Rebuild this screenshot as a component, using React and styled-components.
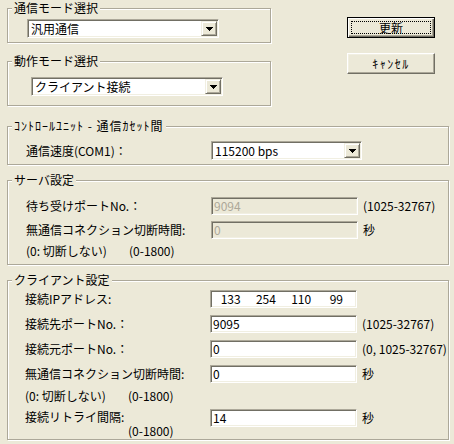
import React from 'react';
import styled, { createGlobalStyle } from 'styled-components';

const GlobalStyle = createGlobalStyle`
  html, body { margin: 0; padding: 0; background: #ECE9D8; }
  body {
    font-family: "MS UI Gothic", "Noto Sans CJK JP", "Liberation Sans", sans-serif;
    font-size: 12px; color: #000;
  }
`;

const Dialog = styled.div`
  width: 454px; height: 444px; box-sizing: border-box;
  padding: 2px 5px 0 7px;
  background: #ECE9D8;
  display: flex; flex-direction: column;
`;

const Top = styled.div`display: flex;`;
const LeftCol = styled.div`width: 264px; display: flex; flex-direction: column; gap: 12px;`;
const ButtonCol = styled.div`
  margin-left: 76px; padding-top: 15px;
  display: flex; flex-direction: column; gap: 15px;
`;

const Group = styled.fieldset`
  margin: ${p => p.$mt || 0}px 0 0;
  padding: 0;
  min-width: 0;
  border: 1px solid #ACA899;
  box-shadow: 1px 1px 0 #fff, inset 1px 1px 0 #fff;
`;

// half-width kana in the legend/button come out narrower than MS UI Gothic, so $wide spreads them
const Legend = styled.legend`
  margin-left: 4px;
  padding: 0 2px;
  line-height: 12px;
  letter-spacing: ${p => (p.$wide ? '1px' : 'normal')};
  background: #ECE9D8;
  white-space: nowrap;
`;

const Body = styled.div`
  padding: ${p => p.$pad};
  display: flex; flex-direction: column;
  gap: ${p => p.$gap || 0}px;
`;

const Combo = styled.div`
  width: ${p => p.$w}px; height: 19px; box-sizing: border-box;
  display: flex; align-items: center;
  background: #fff;
  border: 1px solid; border-color: #ACA899 #fff #fff #ACA899;
  box-shadow: inset 1px 1px 0 #716F64, inset -1px -1px 0 #F1EFE2;
  padding: 1px;
`;

const ComboText = styled.span`flex: 1; padding-left: 2px; line-height: 12px; white-space: nowrap;`;

const DropButton = styled.span`
  width: 16px; height: 15px; box-sizing: border-box;
  display: flex; align-items: center; justify-content: center;
  background: #ECE9D8;
  border: 1px solid; border-color: #F1EFE2 #716F64 #716F64 #F1EFE2;
  box-shadow: inset 1px 1px 0 #fff, inset -1px -1px 0 #ACA899;
`;

const Button = styled.button`
  width: 88px; height: 21px; box-sizing: border-box;
  position: relative;
  font: inherit; line-height: 12px; color: #000;
  letter-spacing: ${p => (p.$wide ? '1.5px' : 'normal')};
  background: #ECE9D8;
  border: 1px solid; padding: 0;
  border-color: ${p => (p.$default ? '#000' : '#fff #716F64 #716F64 #fff')};
  box-shadow: ${p => (p.$default
    ? 'inset 1px 1px 0 #fff, inset -1px -1px 0 #716F64, inset -2px -2px 0 #ACA899'
    : 'inset -1px -1px 0 #ACA899, inset 1px 1px 0 #F1EFE2')};
  &::after {
    content: ''; position: absolute; inset: 3px;
    border: 1px dotted #000;
    display: ${p => (p.$default ? 'block' : 'none')};
  }
`;

const Row = styled.div`
  display: grid;
  grid-template-columns: 185px ${p => p.$fw || 147}px auto;
  align-items: ${p => p.$align || 'center'};
`;

const Label = styled.span`line-height: 12px; white-space: nowrap;`;
const Note = styled.span`
  line-height: 12px; margin-left: 5px; white-space: nowrap;
  padding-top: ${p => p.$pt || 0}px;
`;

const LabelStack = styled.div`display: flex; flex-direction: column; gap: 2px; padding-top: 2px;`;

const Sub = styled.div`display: flex; line-height: 12px; white-space: nowrap;`;
const SubLead = styled.span`width: 103px;`;

const Field = styled.div`
  height: 18px; box-sizing: border-box;
  display: flex; align-items: center;
  background: ${p => (p.$disabled ? '#ECE9D8' : '#fff')};
  color: ${p => (p.$disabled ? '#ACA899' : '#000')};
  border: 1px solid; border-color: #ACA899 #fff #fff #ACA899;
  box-shadow: inset 1px 1px 0 #716F64, inset -1px -1px 0 #F1EFE2;
  padding: 0 2px;
  line-height: 12px;
`;

const IpPart = styled.span`flex: 1; text-align: center;`;

const Arrow = () => (
  <svg width="7" height="4" viewBox="0 0 7 4" shapeRendering="crispEdges">
    <path d="M0 0h7v1h-1v1h-1v1h-1v1h-1v-1h-1v-1h-1v-1h-1z" fill="#000" />
  </svg>
);

const ComboBox = ({ w, value }) => (
  <Combo $w={w}>
    <ComboText>{value}</ComboText>
    <DropButton><Arrow /></DropButton>
  </Combo>
);

export default function App() {
  return (
    <>
      <GlobalStyle />
      <Dialog>
        <Top>
          <LeftCol>
            <Group>
              <Legend>通信モード選択</Legend>
              <Body $pad="5px 0 4px 19px">
                <ComboBox w={192} value="汎用通信" />
              </Body>
            </Group>
            <Group>
              <Legend>動作モード選択</Legend>
              <Body $pad="10px 0 9px 23px">
                <ComboBox w={192} value="クライアント接続" />
              </Body>
            </Group>
          </LeftCol>
          <ButtonCol>
            <Button $default>更新</Button>
            <Button $wide>ｷｬﾝｾﾙ</Button>
          </ButtonCol>
        </Top>

        <Group $mt={14}>
          <Legend $wide>ｺﾝﾄﾛｰﾙﾕﾆｯﾄ - 通信ｶｾｯﾄ間</Legend>
          <Body $pad="9px 0 4px 18px">
            <Row $fw={151}>
              <Label>通信速度(COM1)：</Label>
              <ComboBox w={151} value="115200 bps" />
            </Row>
          </Body>
        </Group>

        <Group $mt={9}>
          <Legend>サーバ設定</Legend>
          <Body $pad="11px 0 7px 18px" $gap={6}>
            <Row>
              <Label>待ち受けポートNo.：</Label>
              <Field $disabled>9094</Field>
              <Note>(1025-32767)</Note>
            </Row>
            <Row>
              <Label>無通信コネクション切断時間:</Label>
              <Field $disabled>0</Field>
              <Note>秒</Note>
            </Row>
            <Sub><SubLead>(0: 切断しない)</SubLead>(0-1800)</Sub>
          </Body>
        </Group>

        <Group $mt={9}>
          <Legend>クライアント設定</Legend>
          <Body $pad="4px 0 2px 17px" $gap={7}>
            <Row>
              <Label>接続IPアドレス:</Label>
              <Field>
                <IpPart>133</IpPart><IpPart>254</IpPart><IpPart>110</IpPart><IpPart>99</IpPart>
              </Field>
            </Row>
            <Row>
              <Label>接続先ポートNo.：</Label>
              <Field>9095</Field>
              <Note>(1025-32767)</Note>
            </Row>
            <Row>
              <Label>接続元ポートNo.：</Label>
              <Field>0</Field>
              <Note>(0, 1025-32767)</Note>
            </Row>
            <Row>
              <Label>無通信コネクション切断時間:</Label>
              <Field>0</Field>
              <Note>秒</Note>
            </Row>
            <Sub><SubLead>(0: 切断しない)</SubLead>(0-1800)</Sub>
            <Row $align="start">
              <LabelStack>
                <Label>接続リトライ間隔:</Label>
                <Sub><SubLead />(0-1800)</Sub>
              </LabelStack>
              <Field>14</Field>
              <Note $pt={3}>秒</Note>
            </Row>
          </Body>
        </Group>
      </Dialog>
    </>
  );
}
